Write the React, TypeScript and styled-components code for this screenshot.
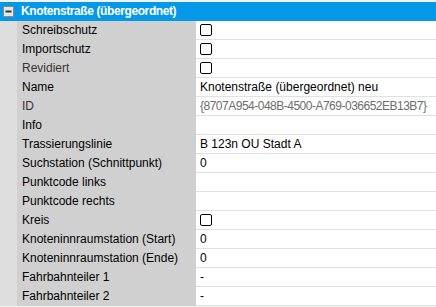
import styled, { createGlobalStyle } from 'styled-components';

const GlobalStyle = createGlobalStyle`
  html, body {
    margin: 0;
    padding: 0;
    background: #ffffff;
  }
  body {
    font-family: "Liberation Sans", Arial, sans-serif;
    font-size: 12px;
  }
`;

const Grid = styled.div`
  width: 436px;
  height: 307px;
  padding-top: 2px;
  box-sizing: border-box;
  background: #f3f3f3;
  overflow: hidden;
`;

const Category = styled.div`
  display: flex;
  align-items: center;
  height: 19px;
  background: #0399e8;
  color: #ffffff;
  font-weight: bold;
`;

const Toggle = styled.span`
  width: 17px;
  display: flex;
  justify-content: center;
  svg {
    display: block;
  }
`;

const CategoryTitle = styled.span`
  padding-left: 4px;
  line-height: 19px;
  letter-spacing: -0.4px;
`;

const Row = styled.div`
  display: grid;
  grid-template-columns: 17px 179px 1fr;
  height: 19px;
`;

const Margin = styled.div`
  background: #dedede;
`;

const Label = styled.div<{ $disabled?: boolean }>`
  background: #d0d0d0;
  padding-left: 5px;
  line-height: 18px;
  white-space: nowrap;
  color: ${(p) => (p.$disabled ? '#3a3030' : '#000000')};
`;

const Value = styled.div<{ $disabled?: boolean; $tight?: boolean }>`
  background: #ffffff;
  border-bottom: 1px solid #e1e1e1;
  padding-left: 4px;
  display: flex;
  align-items: center;
  white-space: nowrap;
  letter-spacing: ${(p) => (p.$tight ? '-0.5px' : 'normal')};
  color: ${(p) => (p.$disabled ? '#6d6d6d' : '#000000')};
`;

const Check = styled.span`
  width: 10px;
  height: 10px;
  border: 1px solid #000000;
  border-radius: 2px;
  background: #ffffff;
`;

type Prop = {
  label: string;
  value?: string;
  check?: boolean;
  disabled?: boolean;
  tight?: boolean;
};

const props: Prop[] = [
  { label: 'Schreibschutz', check: true },
  { label: 'Importschutz', check: true },
  { label: 'Revidiert', check: true, disabled: true },
  { label: 'Name', value: 'Knotenstraße (übergeordnet) neu' },
  { label: 'ID', value: '{8707A954-048B-4500-A769-036652EB13B7}', disabled: true, tight: true },
  { label: 'Info', value: '' },
  { label: 'Trassierungslinie', value: 'B 123n OU Stadt A' },
  { label: 'Suchstation (Schnittpunkt)', value: '0' },
  { label: 'Punktcode links', value: '' },
  { label: 'Punktcode rechts', value: '' },
  { label: 'Kreis', check: true },
  { label: 'Knoteninnraumstation (Start)', value: '0' },
  { label: 'Knoteninnraumstation (Ende)', value: '0' },
  { label: 'Fahrbahnteiler 1', value: '-' },
  { label: 'Fahrbahnteiler 2', value: '-' },
];

const MinusBox = () => (
  <svg width="11" height="11" viewBox="0 0 11 11">
    <rect x="0.5" y="0.5" width="10" height="10" fill="#e6e6e6" stroke="#8a8a8a" />
    <rect x="2.5" y="4.5" width="6" height="2" fill="#333333" />
  </svg>
);

export default function App() {
  return (
    <>
      <GlobalStyle />
      <Grid>
        <Category>
          <Toggle>
            <MinusBox />
          </Toggle>
          <CategoryTitle>Knotenstraße (übergeordnet)</CategoryTitle>
        </Category>
        {props.map((p) => (
          <Row key={p.label}>
            <Margin />
            <Label $disabled={p.disabled}>{p.label}</Label>
            <Value $disabled={p.disabled} $tight={p.tight}>
              {p.check ? <Check /> : p.value}
            </Value>
          </Row>
        ))}
      </Grid>
    </>
  );
}
